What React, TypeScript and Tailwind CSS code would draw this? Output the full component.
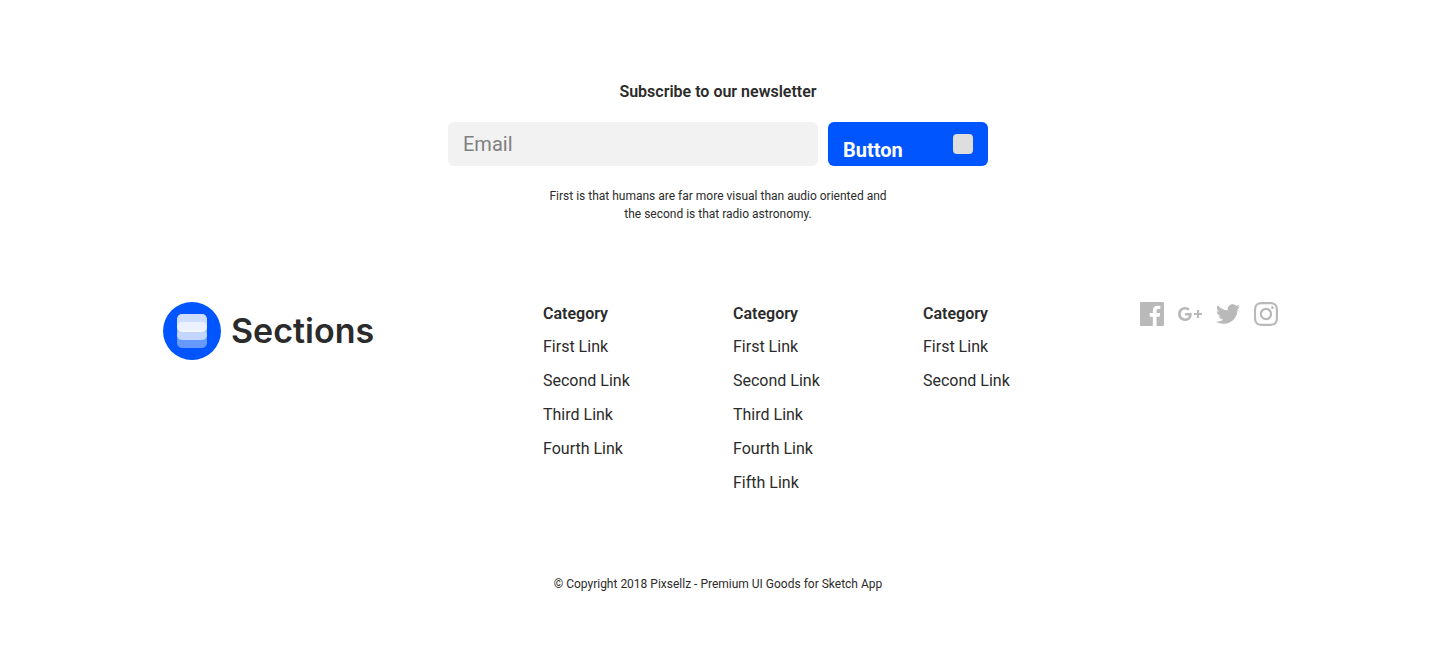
const categories = [
  ["First Link", "Second Link", "Third Link", "Fourth Link"],
  ["First Link", "Second Link", "Third Link", "Fourth Link", "Fifth Link"],
  ["First Link", "Second Link"],
];

const socials = [
  {
    name: "Facebook",
    path: "M22.676 0H1.324C.593 0 0 .593 0 1.324v21.352C0 23.408.593 24 1.324 24h11.494v-9.294H9.689v-3.621h3.129V8.41c0-3.099 1.894-4.785 4.659-4.785 1.325 0 2.464.097 2.796.141v3.24h-1.921c-1.5 0-1.792.721-1.792 1.771v2.311h3.584l-.465 3.63H16.56V24h6.115c.733 0 1.325-.592 1.325-1.324V1.324C24 .593 23.408 0 22.676 0",
  },
  {
    name: "Google Plus",
    path: "M24 11h-3V8h-2v3h-3v2h3v3h2v-3h3M7 11v2.4h4C10.800 14.400 9.800 16.400 7 16.400C4.600 16.400 2.700 14.400 2.700 12C2.700 9.600 4.600 7.600 7 7.600C8.400 7.600 9.300 8.200 9.800 8.700L11.700 6.900C10.500 5.700 8.900 5 7 5C3.100 5 0 8.100 0 12C0 15.900 3.100 19 7 19C11 19 13.700 16.200 13.700 12.200C13.700 11.700 13.700 11.400 13.600 11Z",
  },
  {
    name: "Twitter",
    path: "M23.954 4.569c-.885.389-1.830.654-2.825.775 1.014-.611 1.794-1.574 2.163-2.723-.951.555-2.005.959-3.127 1.184-.896-.959-2.173-1.559-3.591-1.559-2.717 0-4.920 2.203-4.920 4.917 0 .390.045.765.127 1.124C7.691 8.094 4.066 6.130 1.640 3.161c-.427.722-.666 1.561-.666 2.475 0 1.710.870 3.213 2.188 4.096-.807-.026-1.566-.248-2.228-.616v.061c0 2.385 1.693 4.374 3.946 4.827-.413.111-.849.171-1.296.171-.314 0-.615-.030-.916-.086.631 1.953 2.445 3.377 4.604 3.417-1.680 1.319-3.809 2.105-6.102 2.105-.390 0-.779-.023-1.170-.067 2.189 1.394 4.768 2.209 7.557 2.209 9.054 0 13.999-7.496 13.999-13.986 0-.209 0-.420-.015-.630.961-.689 1.800-1.560 2.460-2.548l-.047-.020z",
  },
  {
    name: "Instagram",
    path: "M12 0C8.740 0 8.333.015 7.053.072 5.775.132 4.905.333 4.140.630c-.789.306-1.459.717-2.126 1.384S.935 3.350.630 4.140C.333 4.905.131 5.775.072 7.053.012 8.333 0 8.740 0 12s.015 3.667.072 4.947c.060 1.277.261 2.148.558 2.913.306.788.717 1.459 1.384 2.126.667.666 1.336 1.079 2.126 1.384.766.296 1.636.499 2.913.558C8.333 23.988 8.740 24 12 24s3.667-.015 4.947-.072c1.277-.060 2.148-.262 2.913-.558.788-.306 1.459-.718 2.126-1.384.666-.667 1.079-1.335 1.384-2.126.296-.765.499-1.636.558-2.913.060-1.280.072-1.687.072-4.947s-.015-3.667-.072-4.947c-.060-1.277-.262-2.149-.558-2.913-.306-.789-.718-1.459-1.384-2.126C21.319 1.347 20.651.935 19.860.630c-.765-.297-1.636-.499-2.913-.558C15.667.012 15.260 0 12 0zm0 2.160c3.203 0 3.585.016 4.850.071 1.170.055 1.805.249 2.227.415.562.217.960.477 1.382.896.419.420.679.819.896 1.381.164.422.360 1.057.413 2.227.057 1.266.070 1.646.070 4.850s-.015 3.585-.074 4.850c-.061 1.170-.256 1.805-.421 2.227-.224.562-.479.960-.899 1.382-.419.419-.824.679-1.380.896-.420.164-1.065.360-2.235.413-1.274.057-1.649.070-4.859.070-3.211 0-3.586-.015-4.859-.074-1.171-.061-1.816-.256-2.236-.421-.569-.224-.960-.479-1.379-.899-.421-.419-.690-.824-.900-1.380-.165-.420-.359-1.065-.420-2.235-.045-1.260-.061-1.649-.061-4.844 0-3.196.016-3.586.061-4.861.061-1.170.255-1.814.420-2.234.210-.570.479-.960.900-1.381.419-.419.810-.689 1.379-.898.420-.166 1.051-.361 2.221-.421 1.275-.045 1.650-.060 4.859-.060l.045.030zm0 3.678c-3.405 0-6.162 2.760-6.162 6.162 0 3.405 2.760 6.162 6.162 6.162 3.405 0 6.162-2.760 6.162-6.162 0-3.405-2.760-6.162-6.162-6.162zM12 16c-2.210 0-4-1.790-4-4s1.790-4 4-4 4 1.790 4 4-1.790 4-4 4zm7.846-10.405c0 .795-.646 1.440-1.440 1.440-.795 0-1.440-.646-1.440-1.440 0-.794.646-1.439 1.440-1.439.793-.001 1.440.645 1.440 1.439z",
  },
];

function Newsletter() {
  return (
    <form className="mx-auto flex w-full max-w-[540px] flex-col" onSubmit={(e) => e.preventDefault()}>
      <label htmlFor="email" className="text-center text-base leading-6 font-semibold">
        Subscribe to our newsletter
      </label>
      <div className="mt-[18px] flex h-11 gap-2.5">
        <input
          id="email"
          type="email"
          placeholder="Email"
          className="min-w-0 flex-1 rounded-md bg-[#f2f2f2] px-[15px] text-xl placeholder:text-[#808080] placeholder:opacity-100"
        />
        <button
          type="submit"
          className="flex w-40 items-start justify-between rounded-md bg-[#0055ff] px-[15px] pt-3 text-xl font-bold text-white"
        >
          <span className="pt-0.5 leading-7">Button</span>
          <span className="size-5 rounded bg-[#dedede]" />
        </button>
      </div>
      <p className="mt-[21px] text-center text-xs leading-[18px]">
        First is that humans are far more visual than audio oriented and
        <br />
        the second is that radio astronomy.
      </p>
    </form>
  );
}

function Logo() {
  return (
    <a href="#" className="flex items-start gap-2.5 font-['Inter',sans-serif]">
      <svg viewBox="0 0 58 58" className="size-[58px] shrink-0" aria-hidden="true">
        <circle cx="29" cy="29" r="29" fill="#0055ff" />
        <rect x="14" y="28" width="30" height="18" rx="5" fill="#fff" fillOpacity=".4" />
        <rect x="14" y="20" width="30" height="18" rx="5" fill="#fff" fillOpacity=".6" />
        <rect x="14" y="12" width="30" height="18" rx="5" fill="#fff" fillOpacity=".8" />
      </svg>
      <span className="text-[34px] leading-[58px] font-semibold">Sections</span>
    </a>
  );
}

export default function App() {
  return (
    <footer className="bg-white pt-20 pr-0.5 pb-14 font-['Roboto',sans-serif] text-[#2b2b2b]">
      <Newsletter />
      <div className="mx-auto mt-[79px] grid w-full max-w-[1140px] grid-cols-12">
        <div className="col-span-4 px-[15px]">
          <Logo />
        </div>
        {categories.map((links, i) => (
          <nav key={i} className="col-span-2 px-[15px]">
            <h2 className="text-base leading-6 font-semibold">Category</h2>
            <ul className="mt-[9px]">
              {links.map((link) => (
                <li key={link} className="pb-2.5">
                  <a href="#" className="block text-base leading-6">
                    {link}
                  </a>
                </li>
              ))}
            </ul>
          </nav>
        ))}
        <div className="col-span-2 flex items-start justify-end gap-3.5 pr-2.5">
          {socials.map((s) => (
            <a key={s.name} href="#" aria-label={s.name} className="text-[#b9b9b9]">
              <svg viewBox="0 0 24 24" className="size-6" fill="currentColor" aria-hidden="true">
                <path d={s.path} />
              </svg>
            </a>
          ))}
        </div>
      </div>
      <p className="mt-[70px] text-center text-xs leading-[18px]">
        © Copyright 2018 Pixsellz - Premium UI Goods for Sketch App
      </p>
    </footer>
  );
}
